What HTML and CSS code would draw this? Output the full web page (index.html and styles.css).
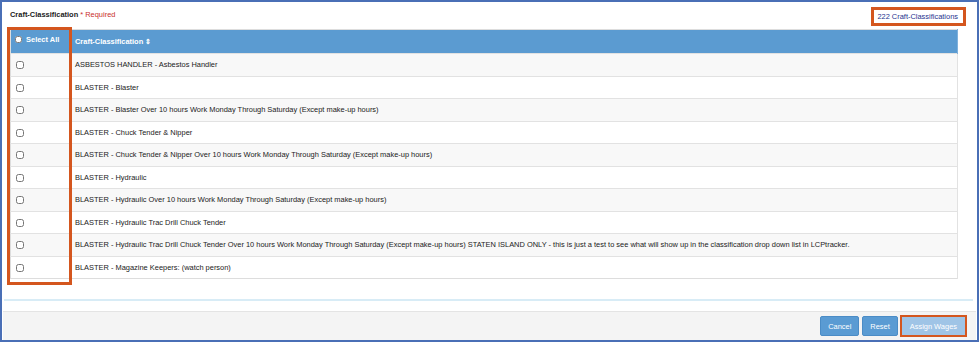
FILE: index.html
```html
<!DOCTYPE html>
<html lang="en">
  <head>
    <meta charset="UTF-8" />
    <title>Craft-Classification</title>
    <link rel="stylesheet" href="styles.css">
  </head>
  <body>
    <div class="frame">
      <div class="topo">
        <div class="titulo">Craft-Classification <span class="req">* Required</span></div>
        <a class="contagem" href="#">222 Craft-Classifications</a>
      </div>

      <div class="tabela-box">
        <div class="marca-coluna"></div>
        <table class="tabela">
          <thead>
            <tr>
              <th class="col-check"><input type="checkbox" /> Select All</th>
              <th>Craft-Classification <span class="ordem">&#8661;</span></th>
            </tr>
          </thead>
          <tbody>
            <tr><td class="col-check"><input type="checkbox" /></td><td>ASBESTOS HANDLER - Asbestos Handler</td></tr>
            <tr><td class="col-check"><input type="checkbox" /></td><td>BLASTER - Blaster</td></tr>
            <tr><td class="col-check"><input type="checkbox" /></td><td>BLASTER - Blaster Over 10 hours Work Monday Through Saturday (Except make-up hours)</td></tr>
            <tr><td class="col-check"><input type="checkbox" /></td><td>BLASTER - Chuck Tender &amp; Nipper</td></tr>
            <tr><td class="col-check"><input type="checkbox" /></td><td>BLASTER - Chuck Tender &amp; Nipper Over 10 hours Work Monday Through Saturday (Except make-up hours)</td></tr>
            <tr><td class="col-check"><input type="checkbox" /></td><td>BLASTER - Hydraulic</td></tr>
            <tr><td class="col-check"><input type="checkbox" /></td><td>BLASTER - Hydraulic Over 10 hours Work Monday Through Saturday (Except make-up hours)</td></tr>
            <tr><td class="col-check"><input type="checkbox" /></td><td>BLASTER - Hydraulic Trac Drill Chuck Tender</td></tr>
            <tr><td class="col-check"><input type="checkbox" /></td><td>BLASTER - Hydraulic Trac Drill Chuck Tender Over 10 hours Work Monday Through Saturday (Except make-up hours) STATEN ISLAND ONLY - this is just a test to see what will show up in the classification drop down list in LCPtracker.</td></tr>
            <tr><td class="col-check"><input type="checkbox" /></td><td>BLASTER - Magazine Keepers: (watch person)</td></tr>
          </tbody>
        </table>
      </div>

      <div class="linha-azul"></div>

      <div class="rodape">
        <button class="botao">Cancel</button>
        <button class="botao">Reset</button>
        <span class="marca-botao"><button class="botao desativado">Assign Wages</button></span>
      </div>
    </div>
  </body>
</html>
```

FILE: styles.css
```css
body {
  margin: 0;
  font-family: "Liberation Sans", Arial, sans-serif;
  font-size: 7.45px;
  color: #222;
  background: #fff;
}

.frame {
  width: 979px;
  height: 342px;
  box-sizing: border-box;
  border: 2px solid #4a6fb6;
  display: flex;
  flex-direction: column;
}

.topo {
  height: 25px;
  display: flex;
  justify-content: space-between;
  align-items: center;
  padding: 0 11px 0 8px;
}

.titulo {
  font-weight: bold;
  color: #222;
}

.req {
  font-weight: normal;
  color: #c9302c;
}

.contagem {
  color: #26338f;
  text-decoration: none;
  border: 3px solid #d4561e;
  padding: 2px 5px 2px 3px;
  margin-top: 4px;
}

.tabela-box {
  position: relative;
  margin-left: 8px;
  margin-top: 2px;
  width: 948px;
}

.tabela {
  width: 100%;
  border-collapse: collapse;
  border: 1px solid #ddd;
}

.tabela th {
  background: #5b9bd1;
  color: #fff;
  font-weight: bold;
  text-align: left;
  height: 23px;
  padding: 0 4px;
  border-right: 1px solid #7fb1dc;
}

.tabela th.col-check {
  vertical-align: top;
  padding-top: 5px;
  height: 18px;
}

.tabela th input {
  width: 7px;
  height: 7px;
  margin: 0 2px 0 0;
  vertical-align: -1px;
}

.ordem {
  font-size: 7px;
}

.tabela td {
  height: 22.5px;
  padding: 0 4px;
  border-top: 1px solid #e2e2e2;
  border-right: 1px solid #e2e2e2;
  box-sizing: border-box;
}

.tabela tbody tr:nth-child(odd) {
  background: #f8f8f8;
}

.col-check {
  width: 51px;
}

.tabela td input {
  width: 8px;
  height: 8px;
  margin: 0 0 0 1px;
  vertical-align: middle;
}

.marca-coluna {
  position: absolute;
  left: -3px;
  top: -2px;
  width: 65px;
  height: 258px;
  box-sizing: border-box;
  border: 3px solid #d4561e;
  pointer-events: none;
}

.linha-azul {
  height: 2px;
  background: #d8ecf6;
  margin: 20px 4px 0 2px;
}

.rodape {
  flex: 1;
  margin: 10px 1px 0 1px;
  background: #f4f4f4;
  border-top: 1px solid #e4e4e4;
  display: flex;
  justify-content: flex-end;
  align-items: center;
  gap: 3px;
  padding: 0 9px 0 0;
}

.botao {
  font-family: "Liberation Sans", Arial, sans-serif;
  font-size: 7.45px;
  color: #fff;
  background: #5a9bd3;
  border: 1px solid #4b8cc6;
  border-radius: 2px;
  height: 20px;
  padding: 0 7px;
  cursor: pointer;
}

.marca-botao {
  display: inline-flex;
  border: 2px solid #d4561e;
  margin-left: -1px;
}

.botao.desativado {
  background: #9fc4e6;
  border-color: #9fc4e6;
  border-radius: 0;
  height: 18px;
  padding: 0 7px;
}
```
